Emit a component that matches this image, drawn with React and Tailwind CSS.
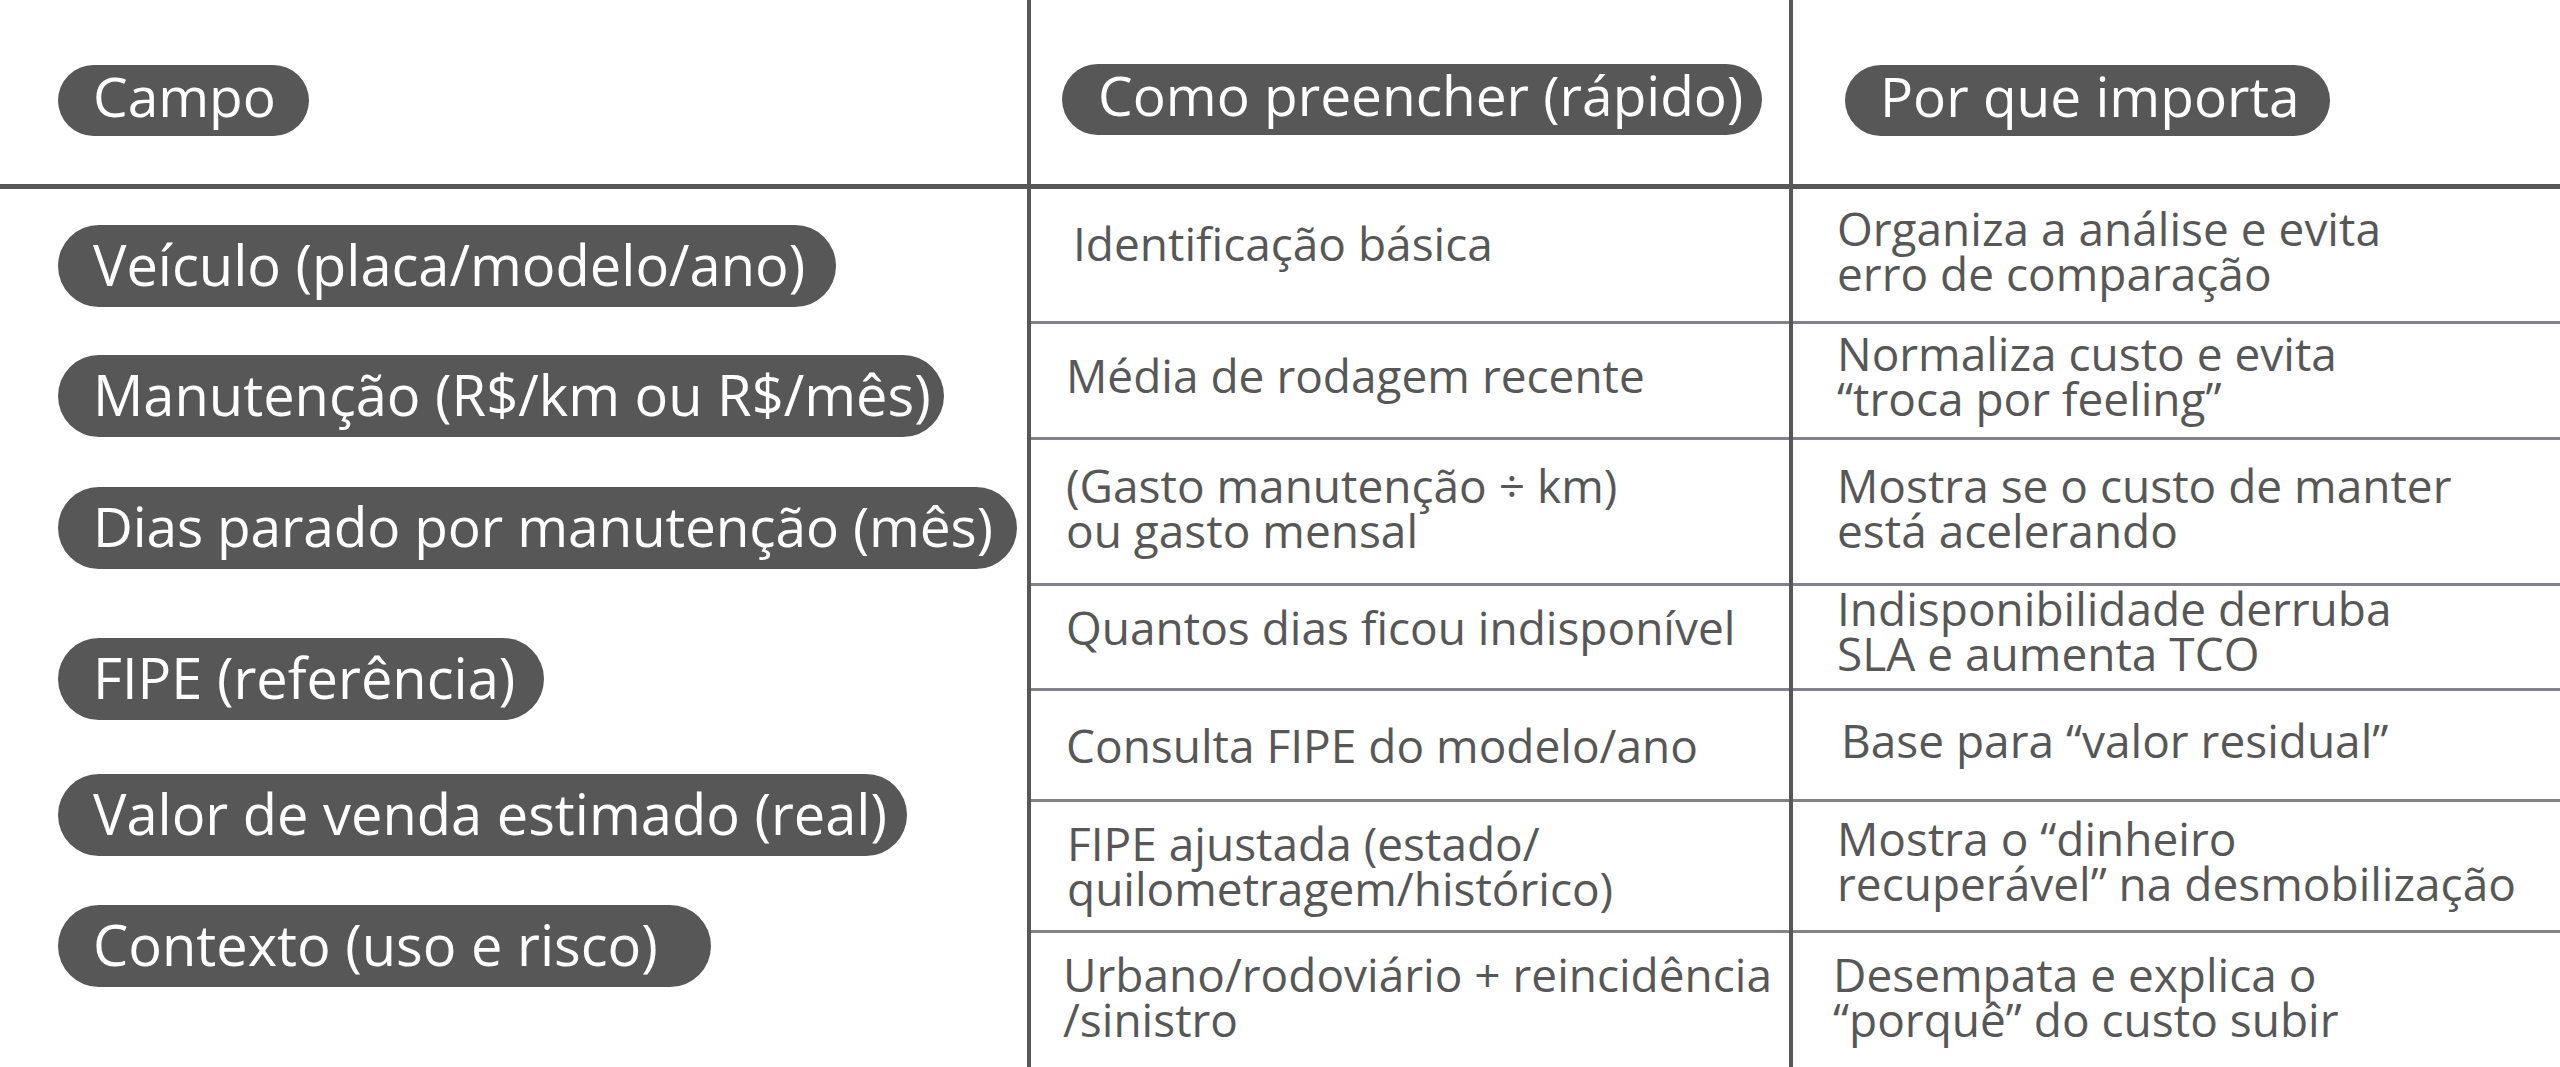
import React from "react";

const font = { fontFamily: '"Open Sans", "Noto Sans", sans-serif' };

function Pill({ children, className = "" }) {
  return (
    <div
      className={
        "flex items-center rounded-full bg-[#575757] text-white whitespace-nowrap pl-[35px] " +
        className
      }
    >
      {children}
    </div>
  );
}

const rows = [
  {
    h: "h-[135px]",
    a: ["Identificação básica"],
    aPad: "pl-[42px] pb-[24px]",
    b: ["Organiza a análise e evita", "erro de comparação"],
    bPad: "pl-[44px] pb-[8px]",
  },
  {
    h: "h-[116px]",
    a: ["Média de rodagem recente"],
    aPad: "pl-[35px] pb-[11px]",
    b: ["Normaliza custo e evita", "“troca por feeling”"],
    bPad: "pl-[44px] pb-[9px]",
  },
  {
    h: "h-[146px]",
    a: ["(Gasto manutenção ÷ km)", "ou gasto mensal"],
    aPad: "pl-[35px] pb-[8px]",
    b: ["Mostra se o custo de manter", "está acelerando"],
    bPad: "pl-[44px] pb-[8px]",
  },
  {
    h: "h-[105px]",
    a: ["Quantos dias ficou indisponível"],
    aPad: "pl-[35px] pb-[20px]",
    b: ["Indisponibilidade derruba", "SLA e aumenta TCO"],
    bPad: "pl-[44px] pb-[13px]",
  },
  {
    h: "h-[111px]",
    a: ["Consulta FIPE do modelo/ano"],
    aPad: "pl-[35px]",
    b: ["Base para “valor residual”"],
    bPad: "pl-[48px] pb-[9px]",
  },
  {
    h: "h-[131px]",
    a: ["FIPE ajustada (estado/", "quilometragem/histórico)"],
    aPad: "pl-[36px]",
    b: ["Mostra o “dinheiro", "recuperável” na desmobilização"],
    bPad: "pl-[44px] pb-[10px]",
  },
  {
    h: "flex-1",
    a: ["Urbano/rodoviário + reincidência", "/sinistro"],
    aPad: "pl-[32px] pb-[7px]",
    b: ["Desempata e explica o", "“porquê” do custo subir"],
    bPad: "pl-[40px] pb-[7px]",
  },
];

function Cell({ lines, pad, h, last }) {
  return (
    <div
      className={
        "flex items-center " +
        h +
        " " +
        pad +
        (last ? "" : " border-b-[3px] border-[#85808a]")
      }
    >
      <div className="text-[46px] leading-[45px] text-[#575757] whitespace-nowrap">
        {lines.map((l, i) => (
          <div key={i}>{l}</div>
        ))}
      </div>
    </div>
  );
}

export default function App() {
  return (
    <div
      className="flex w-[2560px] h-[1067px] bg-white overflow-hidden"
      style={font}
    >
      {/* Column 1 */}
      <div className="flex flex-col w-[1027px] shrink-0">
        <div className="h-[189px] shrink-0 border-b-[5px] border-[#575757] pt-[65px] pl-[58px]">
          <Pill className="h-[71px] w-[251px] text-[55px] pb-[9px]">Campo</Pill>
        </div>
        <div className="flex flex-col items-start pl-[58px] pt-[36px] text-[56px]">
          <Pill className="h-[82px] w-[778px] pb-[4px]">
            Veículo (placa/modelo/ano)
          </Pill>
          <Pill className="h-[82px] w-[886px] mt-[48px] pb-[4px]">
            Manutenção (R$/km ou R$/mês)
          </Pill>
          <Pill className="h-[82px] w-[959px] mt-[50px] pb-[4px] text-[55px] tracking-[-0.15px]">
            Dias parado por manutenção (mês)
          </Pill>
          <Pill className="h-[82px] w-[486px] mt-[69px] pb-[4px]">
            FIPE (referência)
          </Pill>
          <Pill className="h-[82px] w-[849px] mt-[54px] pb-[4px]">
            Valor de venda estimado (real)
          </Pill>
          <Pill className="h-[82px] w-[653px] mt-[49px] pb-[4px]">
            Contexto (uso e risco)
          </Pill>
        </div>
      </div>

      {/* Column 2 */}
      <div className="flex flex-col w-[762px] shrink-0 border-l-4 border-[#575757]">
        <div className="h-[189px] shrink-0 border-b-[5px] border-[#575757] pt-[64px] pl-[31px]">
          <Pill className="h-[71px] w-[700px] text-[55px] pl-[36px] pb-[9px]">
            Como preencher (rápido)
          </Pill>
        </div>
        {rows.map((r, i) => (
          <Cell
            key={i}
            lines={r.a}
            pad={r.aPad}
            h={r.h}
            last={i === rows.length - 1}
          />
        ))}
      </div>

      {/* Column 3 */}
      <div className="flex flex-col flex-1 border-l-4 border-[#575757]">
        <div className="h-[189px] shrink-0 border-b-[5px] border-[#575757] pt-[65px] pl-[52px]">
          <Pill className="h-[71px] w-[485px] text-[55px] pb-[9px]">
            Por que importa
          </Pill>
        </div>
        {rows.map((r, i) => (
          <Cell
            key={i}
            lines={r.b}
            pad={r.bPad}
            h={r.h}
            last={i === rows.length - 1}
          />
        ))}
      </div>
    </div>
  );
}
